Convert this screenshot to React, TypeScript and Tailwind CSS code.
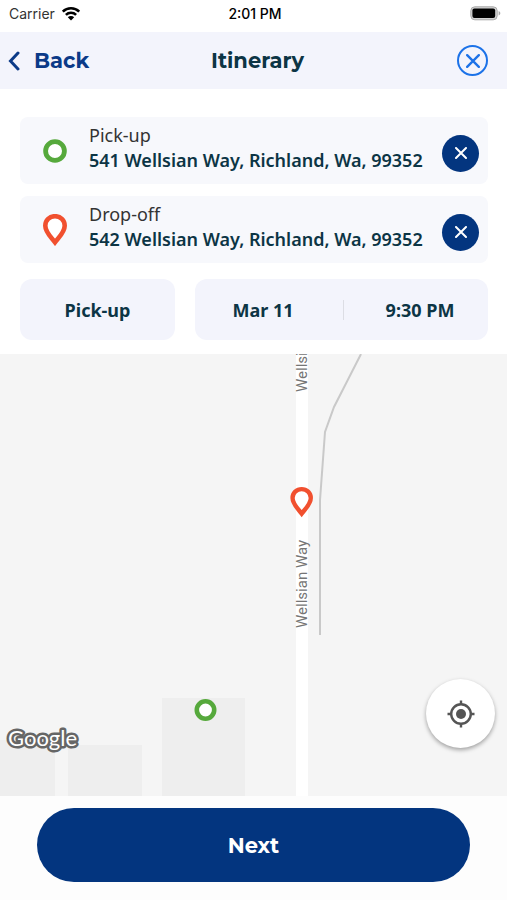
import { ReactNode } from "react";

const HEADING = "font-['Montserrat','Inter',sans-serif]";

function WifiIcon() {
  return (
    <svg viewBox="0 0 20 15" className="h-[15px] w-5" aria-hidden="true">
      <g fill="none" stroke="#000" strokeWidth="2.6">
        <path d="M1.8 5.6a11.7 11.7 0 0 1 16.4 0" />
        <path d="M4.9 8.9a7.3 7.3 0 0 1 10.2 0" />
      </g>
      <path d="M10 14.4 6.8 11.2a4.6 4.6 0 0 1 6.4 0z" fill="#000" />
    </svg>
  );
}

function BatteryIcon() {
  return (
    <svg viewBox="0 0 31 15" className="h-[15px] w-[31px]" aria-hidden="true">
      <rect x="0.8" y="0.8" width="26.4" height="13" rx="4" fill="#d4d4d4" stroke="#a8a8a8" strokeWidth="1" />
      <rect x="2.4" y="2.6" width="22.8" height="9.4" rx="2" fill="#000" />
      <path d="M28.6 5v4.6c1.2-.5 1.7-1.3 1.7-2.3s-.5-1.8-1.7-2.3z" fill="#a8a8a8" />
    </svg>
  );
}

function Cross({ className }: { className: string }) {
  return (
    <svg viewBox="0 0 12 12" className={className} aria-hidden="true">
      <path d="M1 1l10 10M11 1L1 11" fill="none" stroke="currentColor" strokeWidth="2" strokeLinecap="round" />
    </svg>
  );
}

function RingIcon() {
  return (
    <svg viewBox="0 0 24 24" className="size-6" aria-hidden="true">
      <circle cx="12" cy="12" r="9.4" fill="#fff" stroke="#56a93c" strokeWidth="4.8" />
    </svg>
  );
}

const PIN_PATH = "M12 2.2c-5.4 0-9.7 4.2-9.7 9.5 0 6.4 5.6 11.2 9.7 16.6 4.1-5.4 9.7-10.2 9.7-16.6 0-5.3-4.3-9.5-9.7-9.5z";

function PinIcon() {
  return (
    <svg viewBox="0 0 24 32" className="h-8 w-6" aria-hidden="true">
      <path d={PIN_PATH} fill="#fff" stroke="#f1502f" strokeWidth="4.6" />
    </svg>
  );
}

function Stop({ icon, label, address }: { icon: ReactNode; label: string; address: string }) {
  return (
    <li className="flex h-[67px] items-center rounded-lg bg-[#f7f8fc] pr-[9px]">
      <span className="flex w-[69px] shrink-0 justify-center">{icon}</span>
      <div className="min-w-0 flex-1 pb-[6px] text-lg leading-[25px] whitespace-nowrap">
        <p className="text-[#333]">{label}</p>
        <p className="font-semibold text-[#0c3545]">{address}</p>
      </div>
      <button
        type="button"
        aria-label={`Remove ${label}`}
        className="mt-[5px] flex size-[37px] shrink-0 items-center justify-center rounded-full bg-[#03357f] text-white"
      >
        <Cross className="size-3" />
      </button>
    </li>
  );
}

function Map() {
  return (
    <section aria-label="Map" className="relative min-h-[442px] flex-1 overflow-hidden bg-[#f5f5f5]">
      <svg viewBox="0 0 507 442" preserveAspectRatio="xMidYMid slice" className="absolute inset-0 size-full">
        <g fill="#eeeeee">
          <rect x="0" y="386" width="55" height="56" />
          <rect x="68" y="391" width="74" height="51" />
          <rect x="162" y="344" width="83" height="98" />
        </g>
        <rect x="296" y="0" width="12" height="442" fill="#fff" />
        <path d="M361 0 334 53 325 78 320 146V281" fill="none" stroke="#c9c9c9" strokeWidth="2" />
        <g fill="#757575" className="font-['Roboto',sans-serif] text-[15px]">
          <text transform="translate(307 38) rotate(-90)">Wellsian Way</text>
          <text transform="translate(307 274) rotate(-90)">Wellsian Way</text>
        </g>
        <path
          d={PIN_PATH}
          transform="translate(290.4 133) scale(0.94)"
          fill="#fff"
          stroke="#f1502f"
          strokeWidth="4.6"
        />
        <circle cx="205.5" cy="356" r="8.7" fill="#fff" stroke="#56a93c" strokeWidth="4.6" />
        <text
          x="8"
          y="392"
          fill="#fff"
          stroke="#666"
          strokeWidth="5"
          strokeLinejoin="round"
          paintOrder="stroke"
          className="font-['Lato',sans-serif] text-[22px]"
        >
          Google
        </text>
      </svg>
      <button
        type="button"
        aria-label="Show my location"
        className="absolute right-3 bottom-12 flex size-[69px] items-center justify-center rounded-full bg-white shadow-[0_2px_4px_rgba(0,0,0,0.35)]"
      >
        <svg viewBox="0 0 28 28" className="size-7" aria-hidden="true">
          <circle cx="14" cy="14" r="9.8" fill="none" stroke="#555" strokeWidth="2.4" />
          <circle cx="14" cy="14" r="5" fill="#555" />
          <path d="M14 .5v4M14 23.5v4M.5 14h4M23.5 14h4" stroke="#555" strokeWidth="2.4" />
        </svg>
      </button>
    </section>
  );
}

export default function App() {
  return (
    <div className="flex min-h-screen flex-col bg-white font-['Noto_Sans','Open_Sans',sans-serif]">
      <div className="grid h-8 grid-cols-3 items-center pr-[6px] pl-[9px] pb-[5px] font-['Inter',sans-serif] text-sm text-black">
        <span className="flex items-center gap-[6px] text-[#333]">
          Carrier
          <WifiIcon />
        </span>
        <span className="text-center font-medium">2:01 PM</span>
        <span className="flex justify-end">
          <BatteryIcon />
        </span>
      </div>

      <header className="grid h-[57px] grid-cols-[1fr_auto_1fr] items-center bg-[#f3f4fc] pl-2">
        <button type="button" className={`${HEADING} flex items-center gap-[14px] text-[21px] font-bold text-[#0b3a88]`}>
          <svg viewBox="0 0 12 20" className="h-5 w-3" aria-hidden="true">
            <path d="M10 2 2.5 10l7.5 8" fill="none" stroke="currentColor" strokeWidth="3" strokeLinecap="round" />
          </svg>
          Back
        </button>
        <h1 className={`${HEADING} text-[21px] font-bold text-[#0c3545]`}>Itinerary</h1>
        <button
          type="button"
          aria-label="Close"
          className="mr-[19px] flex size-[31px] items-center justify-center justify-self-end rounded-full border-2 border-[#1c72e8] text-[#1c72e8]"
        >
          <Cross className="size-[14px]" />
        </button>
      </header>

      <main className="flex flex-1 flex-col">
        <div className="pt-7 pr-[19px] pb-[14px] pl-5">
          <ul className="flex flex-col gap-3">
            <Stop icon={<RingIcon />} label="Pick-up" address="541 Wellsian Way, Richland, Wa, 99352" />
            <Stop icon={<PinIcon />} label="Drop-off" address="542 Wellsian Way, Richland, Wa, 99352" />
          </ul>
          <div className="mt-4 grid grid-cols-[155fr_293fr] gap-5 text-lg font-bold text-[#0c3545]">
            <button type="button" className="h-[61px] rounded-xl bg-[#f3f4fc]">
              Pick-up
            </button>
            <div className="flex h-[61px] items-center rounded-xl bg-[#f3f4fc]">
              <button type="button" className="h-full flex-1 pr-3">
                Mar 11
              </button>
              <span className="h-5 w-px bg-[#dcdde4]" />
              <button type="button" className="h-full flex-1 pl-2">
                9:30 PM
              </button>
            </div>
          </div>
        </div>
        <Map />
      </main>

      <footer className="bg-[#fdfdfd] px-[37px] pt-3 pb-[18px]">
        <button type="button" className={`${HEADING} h-[74px] w-full rounded-full bg-[#03357f] pt-px text-[21px] font-bold text-white`}>
          Next
        </button>
      </footer>
    </div>
  );
}
